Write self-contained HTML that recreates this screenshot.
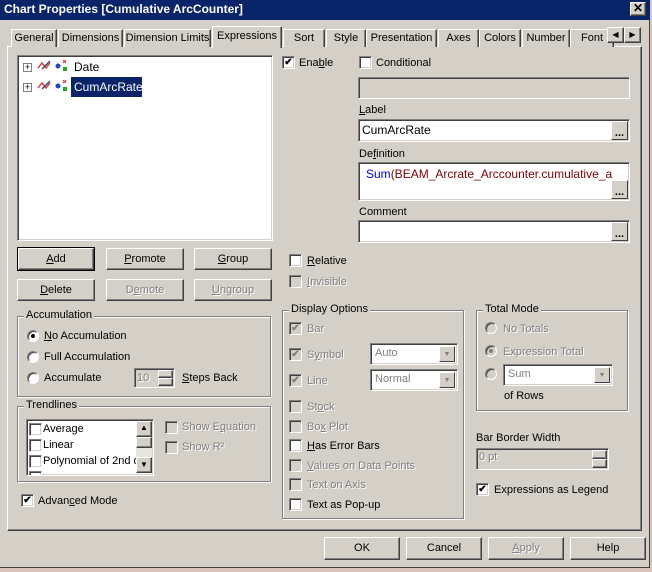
<!DOCTYPE html>
<html><head><meta charset="utf-8"><style>
*{box-sizing:border-box;margin:0;padding:0}
body{width:652px;height:572px;background:#d8c4bc;font-family:"Liberation Sans",sans-serif;font-size:11px;color:#000;position:relative;overflow:hidden}
.a{position:absolute}
#dlg{left:0;top:0;width:650px;height:568px;background:#d4d0c8;border-right:1px solid #404040;border-bottom:1px solid #404040}
#title{left:0;top:0;width:650px;height:20px;background:#0a246a;color:#fff;font-weight:bold;font-size:12px;line-height:19px;padding-left:4px}
.btn{position:absolute;background:#d4d0c8;border:1px solid;border-color:#fff #404040 #404040 #fff;box-shadow:inset -1px -1px #808080;text-align:center;line-height:20px;font-size:11px}
.def{outline:1px solid #000}
.dis{color:#808080;text-shadow:1px 1px #fff}
.sunk{position:absolute;background:#fff;border:1px solid;border-color:#808080 #fff #fff #808080;box-shadow:inset 1px 1px #404040,inset -1px -1px #d4d0c8}
.sunk.g{background:#d4d0c8}
.cb{position:absolute;width:13px;height:13px;background:#fff;border:1px solid;border-color:#808080 #fff #fff #808080;box-shadow:inset 1px 1px #404040,inset -1px -1px #d4d0c8;font-size:10px;line-height:11px;text-align:center;font-weight:bold}
.cb.g{background:#d4d0c8;color:#808080}
.rd{position:absolute;width:12px;height:12px;border-radius:50%;background:#fff;border:1px solid;border-color:#808080 #fff #fff #808080;box-shadow:inset 1px 1px #404040}
.rd.g{background:#d4d0c8}
.rd.on::after{content:"";position:absolute;left:3px;top:3px;width:4px;height:4px;border-radius:50%;background:#000}
.rd.g.on::after{background:#808080}
.grp{position:absolute;border:1px solid #808080;box-shadow:1px 1px #fff,inset 1px 1px #fff}
.grp>span{position:absolute;left:6px;top:-8px;background:#d4d0c8;padding:0 2px;white-space:nowrap}
.tab{position:absolute;top:29px;height:18px;border:1px solid;border-bottom:none;border-color:#fff #404040 #404040 #fff;box-shadow:inset -1px 0 #808080;text-align:center;line-height:17px;background:#d4d0c8;font-size:11px;white-space:nowrap;overflow:hidden}
.t{position:absolute;white-space:nowrap;font-size:11px;padding-top:1px}
u{text-decoration:underline}
.dd{position:absolute;width:16px;top:2px;bottom:2px;right:2px;background:#d4d0c8;border:1px solid;border-color:#fff #404040 #404040 #fff;font-size:7px;color:#808080;text-align:center;line-height:16px}
.dots{position:absolute;right:1px;bottom:1px;width:17px;height:19px;background:#d4d0c8;border:1px solid;border-color:#fff #404040 #404040 #fff;text-align:center;font-weight:bold;line-height:22px;font-size:11px}
</style></head><body>
<div id="dlg" class="a"></div>
<div id="title" class="a">Chart Properties [Cumulative ArcCounter]</div>
<div class="btn" style="left:630px;top:2px;width:16px;height:14px;line-height:11px;font-weight:bold;font-size:12px">✕</div>

<div class="a" style="left:7px;top:46px;width:635px;height:485px;border:1px solid;border-color:#fff #404040 #404040 #fff;box-shadow:inset -1px -1px #808080"></div>
<div class="tab" style="left:11px;width:46px">General</div>
<div class="tab" style="left:58px;width:65px">Dimensions</div>
<div class="tab" style="left:124px;width:87px">Dimension Limits</div>
<div class="tab" style="left:212px;top:26px;height:22px;width:70px;line-height:19px;z-index:2">Expressions</div>
<div class="tab" style="left:283px;width:42px">Sort</div>
<div class="tab" style="left:326px;width:40px">Style</div>
<div class="tab" style="left:366px;width:71px">Presentation</div>
<div class="tab" style="left:438px;width:41px">Axes</div>
<div class="tab" style="left:479px;width:42px">Colors</div>
<div class="tab" style="left:522px;width:48px">Number</div>
<div class="tab" style="left:570px;width:44px">Font</div>
<div class="btn" style="left:607px;top:27px;width:17px;height:16px;line-height:14px;font-size:8px">◀</div>
<div class="btn" style="left:624px;top:27px;width:17px;height:16px;line-height:14px;font-size:8px">▶</div>

<div class="sunk" style="left:17px;top:55px;width:256px;height:186px"></div>
<div class="a" style="left:23px;top:63px;width:9px;height:9px;border:1px solid #808080;background:#fff;font-size:9px;line-height:6px;text-align:center">+</div>
<div class="a" style="left:23px;top:83px;width:9px;height:9px;border:1px solid #808080;background:#fff;font-size:9px;line-height:6px;text-align:center">+</div>
<svg class="a" style="left:37px;top:59px" width="34" height="36"><g fill="none" stroke-width="1.5"><path d="M1 9 L5 4 L9 9 L13 4" stroke="#d44"/><path d="M5 10 L13 2" stroke="#448"/><path d="M1 29 L5 24 L9 29 L13 24" stroke="#d44"/><path d="M5 30 L13 22" stroke="#448"/></g><circle cx="21" cy="7" r="2.5" fill="#24c"/><rect x="26" y="8" width="4" height="4" fill="#2a2"/><path d="M26 1 l3 3 M29 1 l-3 3" stroke="#d22"/><circle cx="21" cy="27" r="2.5" fill="#24c"/><rect x="26" y="28" width="4" height="4" fill="#2a2"/><path d="M26 21 l3 3 M29 21 l-3 3" stroke="#d22"/></svg>
<div class="t" style="left:74px;top:59px;font-size:12px">Date</div>
<div class="a" style="left:71px;top:77px;width:71px;height:20px;background:#0a246a"></div>
<div class="t" style="left:74px;top:79px;color:#fff;font-size:12px">CumArcRate</div>

<div class="btn def" style="left:18px;top:248px;width:76px;height:22px"><u>A</u>dd</div>
<div class="btn" style="left:106px;top:248px;width:78px;height:22px"><u>P</u>romote</div>
<div class="btn" style="left:194px;top:248px;width:78px;height:22px"><u>G</u>roup</div>
<div class="btn" style="left:17px;top:279px;width:78px;height:22px"><u>D</u>elete</div>
<div class="btn dis" style="left:106px;top:279px;width:78px;height:22px">D<u>e</u>mote</div>
<div class="btn dis" style="left:194px;top:279px;width:78px;height:22px"><u>U</u>ngroup</div>

<div class="grp" style="left:17px;top:316px;width:254px;height:81px"><span>Accumulation</span></div>
<div class="rd on" style="left:27px;top:330px"></div><div class="t" style="left:44px;top:329px"><u>N</u>o Accumulation</div>
<div class="rd" style="left:27px;top:351px"></div><div class="t" style="left:44px;top:350px">Full Accumulation</div>
<div class="rd" style="left:27px;top:372px"></div><div class="t" style="left:44px;top:371px">Accumulate</div>
<div class="sunk g" style="left:134px;top:368px;width:41px;height:20px"></div>
<div class="btn" style="left:158px;top:370px;width:15px;height:8px"></div>
<div class="btn" style="left:158px;top:378px;width:15px;height:8px"></div>
<div class="t dis" style="left:137px;top:371px">10</div>
<div class="t" style="left:182px;top:371px"><u>S</u>teps Back</div>

<div class="grp" style="left:17px;top:406px;width:254px;height:76px"><span>Trendlines</span></div>
<div class="sunk" style="left:26px;top:419px;width:128px;height:57px;overflow:hidden">
<div class="cb" style="left:2px;top:3px"></div><div class="t" style="left:16px;top:2px">Average</div>
<div class="cb" style="left:2px;top:19px"></div><div class="t" style="left:16px;top:18px">Linear</div>
<div class="cb" style="left:2px;top:35px"></div><div class="t" style="left:16px;top:34px">Polynomial of 2nd de</div>
<div class="cb" style="left:2px;top:51px"></div>
</div>
<div class="a" style="left:136px;top:421px;width:16px;height:52px;background:#e8e6e0"></div>
<div class="btn" style="left:136px;top:421px;width:16px;height:16px;line-height:12px;font-size:8px">▲</div>
<div class="btn" style="left:136px;top:437px;width:16px;height:11px"></div>
<div class="btn" style="left:136px;top:457px;width:16px;height:16px;line-height:13px;font-size:8px">▼</div>
<div class="cb g" style="left:165px;top:421px"></div><div class="t dis" style="left:182px;top:420px">Show E<u>q</u>uation</div>
<div class="cb g" style="left:165px;top:441px"></div><div class="t dis" style="left:182px;top:440px">Show R²</div>

<div class="cb" style="left:21px;top:494px">✔</div><div class="t" style="left:38px;top:494px">Advan<u>c</u>ed Mode</div>

<div class="cb" style="left:282px;top:56px">✔</div><div class="t" style="left:299px;top:56px">Ena<u>b</u>le</div>
<div class="cb" style="left:359px;top:56px"></div><div class="t" style="left:376px;top:56px">Conditional</div>
<div class="sunk g" style="left:358px;top:77px;width:272px;height:22px"></div>
<div class="t" style="left:359px;top:103px"><u>L</u>abel</div>
<div class="sunk" style="left:358px;top:119px;width:272px;height:23px"><div class="dots">...</div></div>
<div class="t" style="left:362px;top:122px;font-size:12px">CumArcRate</div>
<div class="t" style="left:359px;top:147px">De<u>f</u>inition</div>
<div class="sunk" style="left:358px;top:162px;width:272px;height:39px;overflow:hidden"><div class="dots">...</div>
<div class="t" style="left:7px;top:3px;color:#0000e0;font-size:12px">Sum<span style="color:#800000">(BEAM_Arcrate_Arccounter.cumulative_a</span></div></div>
<div class="t" style="left:359px;top:205px">Comment</div>
<div class="sunk" style="left:358px;top:220px;width:272px;height:23px"><div class="dots">...</div></div>

<div class="cb" style="left:289px;top:254px"></div><div class="t" style="left:307px;top:254px"><u>R</u>elative</div>
<div class="cb g" style="left:289px;top:275px"></div><div class="t dis" style="left:307px;top:275px"><u>I</u>nvisible</div>

<div class="grp" style="left:282px;top:310px;width:182px;height:209px"><span>Display Options</span></div>
<div class="cb g" style="left:289px;top:322px">✔</div><div class="t dis" style="left:307px;top:322px">Bar</div>
<div class="cb g" style="left:289px;top:348px">✔</div><div class="t dis" style="left:307px;top:348px">S<u>y</u>mbol</div>
<div class="cb g" style="left:289px;top:374px">✔</div><div class="t dis" style="left:307px;top:374px">Line</div>
<div class="sunk" style="left:370px;top:343px;width:88px;height:22px"><div class="dd">▼</div></div><div class="t dis" style="left:375px;top:346px">Auto</div>
<div class="sunk" style="left:370px;top:369px;width:88px;height:22px"><div class="dd">▼</div></div><div class="t dis" style="left:375px;top:372px">Normal</div>
<div class="cb g" style="left:289px;top:400px"></div><div class="t dis" style="left:307px;top:400px">St<u>o</u>ck</div>
<div class="cb g" style="left:289px;top:420px"></div><div class="t dis" style="left:307px;top:420px">Bo<u>x</u> Plot</div>
<div class="cb" style="left:289px;top:439px"></div><div class="t" style="left:307px;top:439px"><u>H</u>as Error Bars</div>
<div class="cb g" style="left:289px;top:459px"></div><div class="t dis" style="left:307px;top:459px"><u>V</u>alues on Data Points</div>
<div class="cb g" style="left:289px;top:478px"></div><div class="t dis" style="left:307px;top:478px">Text on Axis</div>
<div class="cb" style="left:289px;top:498px"></div><div class="t" style="left:307px;top:498px">Text as Pop-up</div>

<div class="grp" style="left:476px;top:310px;width:152px;height:101px"><span>Total Mode</span></div>
<div class="rd g" style="left:485px;top:322px"></div><div class="t dis" style="left:503px;top:322px">No Totals</div>
<div class="rd g on" style="left:485px;top:345px"></div><div class="t dis" style="left:503px;top:345px">Expression Total</div>
<div class="rd g" style="left:485px;top:368px"></div>
<div class="sunk" style="left:503px;top:364px;width:110px;height:22px"><div class="dd">▼</div></div><div class="t dis" style="left:508px;top:367px">Sum</div>
<div class="t" style="left:504px;top:389px">of Rows</div>

<div class="t" style="left:476px;top:431px">Bar Border Width</div>
<div class="sunk g" style="left:476px;top:448px;width:133px;height:22px"></div><div class="t dis" style="left:479px;top:450px">0 pt</div>
<div class="btn" style="left:592px;top:450px;width:15px;height:9px"></div>
<div class="btn" style="left:592px;top:459px;width:15px;height:9px"></div>

<div class="cb" style="left:476px;top:483px">✔</div><div class="t" style="left:494px;top:483px">Expressions as Legend</div>

<div class="btn" style="left:324px;top:537px;width:76px;height:23px">OK</div>
<div class="btn" style="left:406px;top:537px;width:76px;height:23px">Cancel</div>
<div class="btn dis" style="left:488px;top:537px;width:76px;height:23px"><u>A</u>pply</div>
<div class="btn" style="left:570px;top:537px;width:76px;height:23px">Help</div>
</body></html>
